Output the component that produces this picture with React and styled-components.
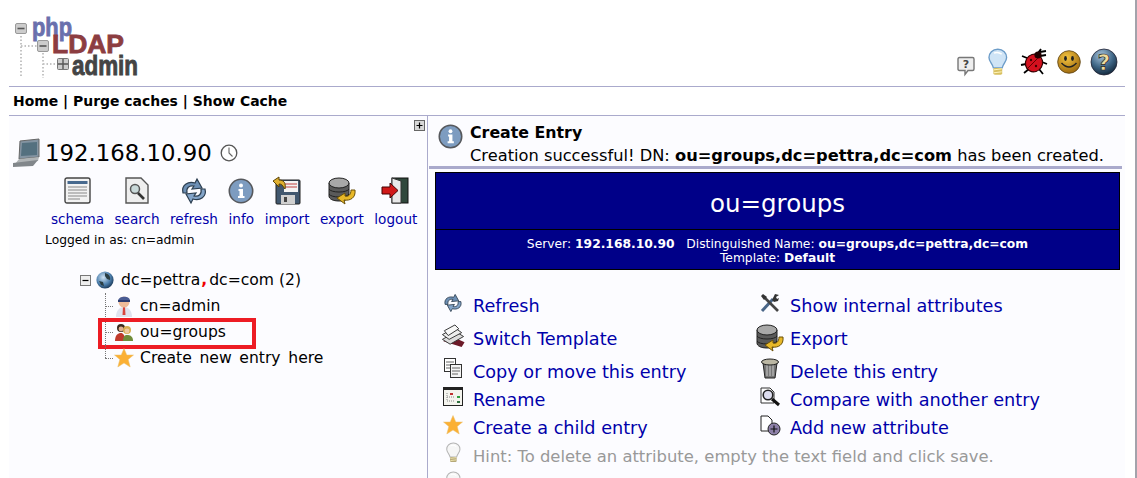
import React from 'react'
import styled, { createGlobalStyle } from 'styled-components'

const GlobalStyle = createGlobalStyle`
  html, body {
    margin: 0;
    height: 478px;
    overflow: hidden;
    background: #fff;
    font-family: "DejaVu Sans", Verdana, sans-serif;
  }
`

const Shell = styled.div`
  width: 1137px;
  height: 478px;
  box-sizing: border-box;
  border-right: 2px solid #a3a3ab;
  padding: 0 10px 0 9px;
  overflow: hidden;
`
const Header = styled.header`
  height: 87px;
  box-sizing: border-box;
  display: flex;
  justify-content: space-between;
  align-items: flex-end;
  border-bottom: 1px solid #aaaacc;
  padding: 0 7px 8px 6px;
`
const LogoWrap = styled.div`
  height: 60px;
`
const HeaderIcons = styled.div`
  display: flex;
  align-items: flex-end;
  margin-bottom: 2px;
`
const HeaderIcon = styled.span`
  margin-left: ${p => p.$gap || 0}px;
  margin-bottom: ${p => p.$lift || 0}px;
`
const Nav = styled.nav`
  height: 29px;
  box-sizing: border-box;
  display: flex;
  align-items: center;
  padding-left: 4px;
  font-size: 13.95px;
  font-weight: 700;
  color: #000;
  border-bottom: 1px solid #aaaacc;
  white-space: pre;
`
const Main = styled.main`
  display: grid;
  grid-template-columns: 419px 1fr;
  background: #fcfcff;
  height: 380px;
`
const LeftPane = styled.section`
  border-right: 1px solid #aaaacc;
  padding: 4px 2px 0 0;
`
const ExpandRow = styled.div`
  display: flex;
  justify-content: flex-end;
  height: 11px;
`
const ServerTitle = styled.div`
  display: flex;
  align-items: center;
  gap: 4px;
  margin: 5px 0 0 4px;
  height: 34px;
  font-size: 22.8px;
  color: #000;
`
const ClockSlot = styled.span`
  margin-left: 4px;
`
const Toolbar = styled.div`
  display: flex;
  gap: 10.4px;
  margin: 6px 0 0 42px;
`
const ToolItem = styled.div`
  display: flex;
  flex-direction: column;
  align-items: center;
  gap: 6px;
  font-size: 13.6px;
  color: #0000aa;
`
const ToolIcon = styled.div`
  height: 29px;
  display: flex;
  align-items: center;
`
const LoggedIn = styled.div`
  margin: 6px 0 0 36px;
  font-size: 12.3px;
  color: #000;
`
const Tree = styled.div`
  margin: 20px 0 0 71px;
  font-size: 15.6px;
  color: #000;
`
const RootRow = styled.div`
  display: flex;
  align-items: center;
  gap: 5px;
  height: 26px;
`
const RootLabel = styled.span`
  margin-left: 2px;
`
const DnComma = styled.span`
  color: #f00000;
  font-weight: 700;
  padding: 0 2px 0 1px;
`
const TreeRow = styled.div`
  position: relative;
  display: flex;
  align-items: center;
  height: 26px;
  margin-left: 25px;
  word-spacing: 2.7px;
`
const Connector = styled.span`
  position: relative;
  align-self: stretch;
  width: 8px;
  flex: none;
  &::before {
    content: '';
    position: absolute;
    left: 0;
    top: 0;
    bottom: ${p => (p.$last ? '50%' : '0')};
    border-left: 1px dotted #777;
  }
  &::after {
    content: '';
    position: absolute;
    left: 0;
    right: 0;
    top: 50%;
    border-top: 1px dotted #777;
  }
`
const TreeIcon = styled.span`
  width: 22px;
  margin-right: 5px;
  flex: none;
  display: flex;
  justify-content: center;
`
const Highlight = styled.span`
  position: absolute;
  left: -7px;
  top: -1px;
  width: 158px;
  height: 31px;
  box-sizing: border-box;
  border: 4px solid #ed1c24;
`
const RightPane = styled.section`
  padding: 7px 3px 0 0;
`
const Message = styled.div`
  display: grid;
  grid-template-columns: 32px 1fr;
  margin-left: 1px;
  padding-left: 9px;
  border-bottom: 3px solid #aaaacc;
  height: 46px;
  box-sizing: border-box;
`
const MessageIcon = styled.div`
  padding-top: 1px;
`
const MessageTitle = styled.div`
  font-size: 15.8px;
  font-weight: 700;
  color: #000;
  line-height: 20px;
`
const MessageBody = styled.div`
  font-size: 16.25px;
  color: #000;
  line-height: 25px;
  white-space: nowrap;
`
const EntryBanner = styled.div`
  margin: 3px 2px 0 7px;
  background: #000088;
  border: 1px solid #000;
  color: #fff;
  text-align: center;
`
const BannerTitle = styled.div`
  height: 56px;
  line-height: 61px;
  font-size: 24.5px;
  border-bottom: 1px solid #000;
`
const BannerMeta = styled.div`
  padding: 7px 0 4px;
  font-size: 12.3px;
  line-height: 14px;
  white-space: pre;
`
const Actions = styled.div`
  display: grid;
  grid-template-columns: 317px 1fr;
  margin: 25px 0 0 13px;
`
const ActionCell = styled.a`
  display: flex;
  align-items: flex-start;
  height: ${p => p.$height}px;
  line-height: 22px;
  color: #0000aa;
  font-size: 17.65px;
  white-space: nowrap;
`
const ActionIcon = styled.span`
  width: 24px;
  margin-right: 8px;
  flex: none;
  display: flex;
  justify-content: center;
  margin-top: ${p => p.$top}px;
`
const HintRow = styled.div`
  grid-column: 1 / 3;
  display: flex;
  align-items: flex-start;
  height: 28px;
  line-height: 22px;
  color: #999;
  font-size: 16.4px;
  white-space: nowrap;
`

const Svg = ({ w, h, vb, children }) => (
  <svg width={w} height={h} viewBox={vb || `0 0 ${w} ${h}`} style={{ display: 'block', flex: 'none', overflow: 'visible' }}>
    {children}
  </svg>
)

const Logo = () => (
  <Svg w={126} h={60}>
    <g stroke="#c4c4c4" strokeWidth="2" strokeDasharray="1.5 2" fill="none">
      <path d="M6 18V60M6 28H22M28 35V60M28 46H42" />
    </g>
    <rect x="0.5" y="5.5" width="11" height="10" rx="1.5" fill="#ccc" stroke="#999" />
    <path d="M2.5 10.5H9.5" stroke="#555" strokeWidth="1.6" />
    <rect x="22.5" y="22.5" width="11" height="11" rx="1.5" fill="#ccc" stroke="#999" />
    <path d="M24.5 28H31.5" stroke="#555" strokeWidth="1.6" />
    <rect x="42.5" y="40.5" width="11" height="11" rx="1" fill="#ccc" stroke="#777" />
    <path d="M43 46H53M48 41V51" stroke="#555" strokeWidth="1.4" />
    <text x="17" y="18" fontFamily="Liberation Sans" fontWeight="700" fontSize="25" fill="#6a70ad" stroke="#6a70ad" strokeWidth="0.8" textLength="40" lengthAdjust="spacingAndGlyphs">php</text>
    <text x="37" y="35" fontFamily="Liberation Sans" fontWeight="700" fontSize="25" fill="#8c3d41" stroke="#8c3d41" strokeWidth="0.8" textLength="72" lengthAdjust="spacingAndGlyphs">LDAP</text>
    <text x="57" y="57" fontFamily="Liberation Sans" fontWeight="700" fontSize="27" fill="#444" stroke="#444" strokeWidth="0.9" textLength="66" lengthAdjust="spacingAndGlyphs">admin</text>
  </Svg>
)

const SpeechIcon = () => (
  <Svg w={18} h={20}>
    <path d="M2.5 1.5H15.5Q17 1.5 17 3V13Q17 14.5 15.5 14.5H11L8 18.5V14.5H2.5Q1 14.5 1 13V3Q1 1.5 2.5 1.5Z" fill="#eee" stroke="#777" strokeWidth="1.4" />
    <text x="9" y="12" textAnchor="middle" fontSize="11" fontWeight="700" fontFamily="DejaVu Sans" fill="#444">?</text>
  </Svg>
)

const BulbIcon = ({ size = 28, dim }) => (
  <Svg w={size * 0.7} h={size} vb="0 0 20 28">
    <path d="M10 1C4.5 1 1 5 1 9.5C1 13.5 4.5 15.5 5.5 20H14.5C15.5 15.5 19 13.5 19 9.5C19 5 15.5 1 10 1Z" fill={dim ? '#f6f6f6' : '#cfe4f6'} stroke={dim ? '#b4b4b4' : '#6c9cc8'} strokeWidth="1.4" />
    <path d="M6 5Q10 3 14 6" stroke="#fff" strokeWidth="1.5" fill="none" />
    <rect x="5.5" y="20" width="9" height="7" rx="1.5" fill={dim ? '#b5a878' : '#d8c060'} />
    <path d="M6 22L14 21M6 25L14 24" stroke="#fff6c0" />
  </Svg>
)

const BugIcon = () => (
  <Svg w={27} h={28}>
    <g stroke="#000" strokeWidth="1.8" fill="none">
      <path d="M6 10L1 8M5 16L0 17M8 21L3 25M19 8L25 7M21 14L26 16M18 21L22 26M17 5L20 1M19 4L25 3" />
    </g>
    <ellipse cx="13" cy="15" rx="8.5" ry="9" fill="#d4101e" stroke="#300" strokeWidth="1.2" transform="rotate(30 13 15)" />
    <circle cx="17" cy="7" r="3.6" fill="#200" />
    <path d="M7 20L17 10" stroke="#600" strokeWidth="1" />
    <circle cx="10" cy="12" r="1.2" fill="#400" />
    <circle cx="15" cy="18" r="1.2" fill="#400" />
  </Svg>
)

const SmileyIcon = () => (
  <Svg w={24} h={25}>
    <defs>
      <radialGradient id="smile" cx="40%" cy="30%" r="70%">
        <stop offset="0" stopColor="#f4c440" />
        <stop offset="1" stopColor="#a06c10" />
      </radialGradient>
    </defs>
    <circle cx="12" cy="12" r="11.3" fill="url(#smile)" stroke="#5a4010" strokeWidth="0.8" />
    <ellipse cx="8.5" cy="8.5" rx="1.4" ry="2.4" fill="#222" />
    <ellipse cx="15.5" cy="8.5" rx="1.4" ry="2.4" fill="#222" />
    <path d="M4.5 13Q12 21 19.5 13" stroke="#222" strokeWidth="1.5" fill="none" />
  </Svg>
)

const HelpIcon = () => (
  <Svg w={28} h={28}>
    <defs>
      <radialGradient id="help" cx="40%" cy="25%" r="75%">
        <stop offset="0" stopColor="#a8c4dc" />
        <stop offset="0.6" stopColor="#3f6686" />
        <stop offset="1" stopColor="#162c40" />
      </radialGradient>
    </defs>
    <circle cx="14" cy="14" r="13" fill="url(#help)" stroke="#223" strokeWidth="0.8" />
    <text x="14" y="22" textAnchor="middle" fontSize="22" fontWeight="700" fontFamily="DejaVu Sans" fill="#f0dc9c" stroke="#222" strokeWidth="0.7">?</text>
  </Svg>
)

const PlusBox = () => (
  <Svg w={11} h={11}>
    <rect x="0.5" y="0.5" width="10" height="10" fill="#d8d8d8" stroke="#666" />
    <path d="M2.5 5.5H8.5M5.5 2.5V8.5" stroke="#000" strokeWidth="1.2" />
  </Svg>
)

const MinusBox = () => (
  <Svg w={11} h={11}>
    <rect x="0.5" y="0.5" width="10" height="10" fill="#eee" stroke="#777" />
    <path d="M2.5 5.5H8.5" stroke="#000" strokeWidth="1.2" />
  </Svg>
)

const ComputerIcon = () => (
  <Svg w={28} h={28}>
    <path d="M7 2L26 0V18L6 20Z" fill="#8494a2" stroke="#666" />
    <path d="M9 4L24 3V16L8 17Z" fill="#54707f" />
    <path d="M6 20L26 18L25 22L2 25Z" fill="#b0b4b6" />
    <path d="M0 24L25 21L20 27L0 28Z" fill="#82878b" />
  </Svg>
)

const ClockIcon = () => (
  <Svg w={18} h={18}>
    <circle cx="9" cy="9" r="7.8" fill="#fff" stroke="#555" strokeWidth="1.3" />
    <path d="M9 3.5V9L12.5 12.5" stroke="#666" strokeWidth="1.1" fill="none" />
  </Svg>
)

const SchemaIcon = () => (
  <Svg w={27} h={27}>
    <rect x="1" y="1" width="25" height="25" rx="2" fill="#f2f2f2" stroke="#444" strokeWidth="1.4" />
    <rect x="3.5" y="4" width="20" height="3" fill="#47698e" />
    <path d="M4 10H23M4 13H23M4 16H23M4 19H23M4 22H16" stroke="#888" />
  </Svg>
)

const SearchIcon = () => (
  <Svg w={24} h={27}>
    <path d="M1 1H16L23 8V26H1Z" fill="#eee" stroke="#555" strokeWidth="1.4" />
    <circle cx="10" cy="12" r="4.5" fill="#c8d8d8" stroke="#555" strokeWidth="1.5" />
    <path d="M13 16L19 22" stroke="#333" strokeWidth="2.6" />
  </Svg>
)

const RefreshIcon = ({ size = 28 }) => (
  <Svg w={size} h={size} vb="0 0 28 28">
    <path d="M3 16C1 8 8 4 15 6L17 2L22 11L12 12L14 9C9 8 6 11 7 16Z" fill="#6d8fb4" stroke="#2c3e50" strokeWidth="1.2" />
    <path d="M25 12C27 20 20 24 13 22L11 26L6 17L16 16L14 19C19 20 22 17 21 12Z" fill="#83a4c8" stroke="#2c3e50" strokeWidth="1.2" />
  </Svg>
)

const InfoIcon = ({ size = 26 }) => (
  <Svg w={size} h={size} vb="0 0 26 26">
    <circle cx="13" cy="13" r="11.7" fill="#7d9cc0" stroke="#56585c" strokeWidth="1.6" />
    <circle cx="13" cy="7.5" r="2" fill="#fff" />
    <path d="M10.5 11H15V18H16.5V20H10V18H11.5V13H10.5Z" fill="#fff" />
  </Svg>
)

const ImportIcon = () => (
  <Svg w={28} h={28}>
    <rect x="3" y="3" width="24" height="24" rx="1" fill="#41576e" stroke="#222" />
    <rect x="11" y="4" width="14" height="11" fill="#f4f4f4" />
    <path d="M12 7H24M12 10H24" stroke="#c04040" />
    <rect x="8" y="18" width="14" height="9" fill="#d0d0d0" />
    <rect x="11" y="20" width="3" height="5" fill="#444" />
    <path d="M0 4L6 0V3C11 3 13 6 12 12L9 8C8 7 7 7 6 7V10Z" fill="#e0b030" stroke="#5a4408" />
  </Svg>
)

const ExportIcon = () => (
  <Svg w={28} h={28}>
    <path d="M1 6V19C1 22 5 24 11 24C17 24 21 22 21 19V6Z" fill="#5a5a5a" stroke="#222" />
    <ellipse cx="11" cy="6" rx="10" ry="5" fill="#a8a8a8" stroke="#222" />
    <path d="M1 12C3 16 19 16 21 12M1 17C3 21 19 21 21 17" stroke="#222" fill="none" />
    <path d="M27 13C28 21 22 24 16 23L17 27L9 21L17 16V19C20 20 23 18 23 13Z" fill="#e8b828" stroke="#6a5008" />
  </Svg>
)

const LogoutIcon = () => (
  <Svg w={27} h={27}>
    <rect x="10" y="1" width="16" height="25" fill="#30483c" stroke="#111" />
    <path d="M10 1L19 4V26H10Z" fill="#e8e8e8" stroke="#333" />
    <path d="M0 10H8V6L16 13.5L8 21V17H0Z" fill="#d01818" stroke="#400" />
  </Svg>
)

const GlobeIcon = () => (
  <Svg w={18} h={18}>
    <defs>
      <radialGradient id="globe" cx="40%" cy="35%" r="70%">
        <stop offset="0" stopColor="#cfe2f2" />
        <stop offset="0.6" stopColor="#4d80ae" />
        <stop offset="1" stopColor="#14304e" />
      </radialGradient>
    </defs>
    <circle cx="9" cy="9" r="8.6" fill="url(#globe)" />
    <path d="M9 2C13 3 15 6 14 9L11 8L9 5Z M3 10L7 11L8 15L5 14Z" fill="#2a3e44" />
  </Svg>
)

const PersonIcon = () => (
  <Svg w={18} h={22}>
    <path d="M1 22C1 15 5 12 9 12C13 12 17 15 17 22Z" fill="#dfe2ee" />
    <path d="M8 12H10L10.5 20H7.5Z" fill="#d8453e" />
    <circle cx="9" cy="7" r="5.5" fill="#eebb99" />
    <path d="M3 6C3 1 15 0 15 6Z" fill="#4a5c94" />
    <rect x="3" y="5" width="12" height="2" fill="#2d3c70" />
  </Svg>
)

const GroupIcon = () => (
  <Svg w={20} h={19}>
    <circle cx="7" cy="5" r="4" fill="#3a2a1c" />
    <circle cx="13" cy="7" r="4" fill="#d8ae50" />
    <circle cx="7" cy="6" r="2.4" fill="#e0b090" />
    <circle cx="13" cy="8" r="2.4" fill="#eec8a0" />
    <path d="M1 18C1 12 4 10 7 10C9 10 11 12 11 18Z" fill="#c0392b" />
    <path d="M9 18C9 13 11 12 13 12C16 12 19 13 19 18Z" fill="#6f8c3a" />
  </Svg>
)

const StarIcon = ({ size = 20 }) => (
  <Svg w={size} h={size} vb="0 0 20 20">
    <path d="M10 0.5L12.8 7H19.5L14.2 11.5L16.2 19L10 15L3.8 19L5.8 11.5L0.5 7H7.2Z" fill="#fbb034" stroke="#e8c070" strokeWidth="0.5" />
  </Svg>
)

const TemplateIcon = () => (
  <Svg w={30} h={25} vb="0 0 26 26">
    <path d="M3 18L22 24L25 19L12 13Z" fill="#6c1a28" />
    <path d="M2 16L16 8L24 13L10 21Z" fill="#ddd" stroke="#333" />
    <path d="M2 11L15 4L22 9L9 16Z" fill="#eee" stroke="#333" />
    <path d="M4 7L15 1L19 5L8 12Z" fill="#f8f8f8" stroke="#333" />
  </Svg>
)

const CopyIcon = () => (
  <Svg w={18} h={20}>
    <rect x="0.5" y="0.5" width="11" height="13" fill="#fff" stroke="#333" />
    <path d="M2 4H10M2 7H10M2 10H8" stroke="#666" />
    <rect x="6.5" y="6.5" width="11" height="13" fill="#f4f4f4" stroke="#333" />
    <path d="M8 10H16M8 13H16M8 16H14" stroke="#666" />
  </Svg>
)

const RenameIcon = () => (
  <Svg w={20} h={19}>
    <rect x="0.5" y="0.5" width="19" height="18" fill="#f4f4ee" stroke="#222" />
    <rect x="1" y="1" width="18" height="2" fill="#222" />
    <rect x="7" y="6" width="3" height="2" fill="#c03030" />
    <rect x="14" y="9" width="3" height="2" fill="#30a040" />
    <rect x="14" y="14" width="3" height="2" fill="#307040" />
    <path d="M4 6V14H12M4 10H12" stroke="#888" strokeDasharray="1 1" fill="none" />
  </Svg>
)

const ToolsIcon = () => (
  <Svg w={20} h={20}>
    <path d="M2 18L13 6" stroke="#4a6688" strokeWidth="3" />
    <path d="M12 7L15 1L19 2L16 4L17 6L19 5L18 8L14 9Z" fill="#333" />
    <path d="M18 18L5 5" stroke="#444" strokeWidth="2.6" />
    <path d="M1 3L3 1L7 4L4 7Z" fill="#333" />
  </Svg>
)

const TrashIcon = () => (
  <Svg w={20} h={21}>
    <path d="M3 5H17L15 20H5Z" fill="#777" stroke="#222" />
    <path d="M7 7V18M10 7V18M13 7V18" stroke="#ccc" />
    <ellipse cx="10" cy="4" rx="8.5" ry="3" fill="#bbb7a4" stroke="#222" />
  </Svg>
)

const CompareIcon = () => (
  <Svg w={21} h={20}>
    <path d="M1 1H10L14 5V16H1Z" fill="#fff" stroke="#333" />
    <circle cx="8" cy="8" r="4.8" fill="#dde" stroke="#222" strokeWidth="1.6" />
    <path d="M12 12L19 18" stroke="#111" strokeWidth="3" />
  </Svg>
)

const AddAttrIcon = () => (
  <Svg w={21} h={21}>
    <path d="M1 1H8L12 5V16H1Z" fill="#fff" stroke="#222" />
    <circle cx="14" cy="14" r="6" fill="#8d80a8" stroke="#222" />
    <path d="M10.5 14H17.5M14 10.5V17.5" stroke="#111" strokeWidth="1.2" />
  </Svg>
)

const tools = [
  ['schema', <SchemaIcon />],
  ['search', <SearchIcon />],
  ['refresh', <RefreshIcon />],
  ['info', <InfoIcon />],
  ['import', <ImportIcon />],
  ['export', <ExportIcon />],
  ['logout', <LogoutIcon />],
]

const actions = [
  [33, 'Refresh', <RefreshIcon size={20} />, 'Show internal attributes', <ToolsIcon />, -2],
  [33, 'Switch Template', <TemplateIcon />, 'Export', <ExportIcon />, -4],
  [28, 'Copy or move this entry', <CopyIcon />, 'Delete this entry', <TrashIcon />, -3],
  [28, 'Rename', <RenameIcon />, 'Compare with another entry', <CompareIcon />, -2],
  [29, 'Create a child entry', <StarIcon />, 'Add new attribute', <AddAttrIcon />, -2],
]

export default function App() {
  return (
    <>
      <GlobalStyle />
      <Shell>
        <Header>
          <LogoWrap><Logo /></LogoWrap>
          <HeaderIcons>
            <HeaderIcon><SpeechIcon /></HeaderIcon>
            <HeaderIcon $gap={13}><BulbIcon /></HeaderIcon>
            <HeaderIcon $gap={13}><BugIcon /></HeaderIcon>
            <HeaderIcon $gap={9} $lift={1}><SmileyIcon /></HeaderIcon>
            <HeaderIcon $gap={9}><HelpIcon /></HeaderIcon>
          </HeaderIcons>
        </Header>
        <Nav>Home | Purge caches | Show Cache</Nav>
        <Main>
          <LeftPane>
            <ExpandRow><PlusBox /></ExpandRow>
            <ServerTitle>
              <ComputerIcon />
              <span>192.168.10.90</span>
              <ClockSlot><ClockIcon /></ClockSlot>
            </ServerTitle>
            <Toolbar>
              {tools.map(([label, icon]) => (
                <ToolItem key={label}>
                  <ToolIcon>{icon}</ToolIcon>
                  {label}
                </ToolItem>
              ))}
            </Toolbar>
            <LoggedIn>Logged in as: cn=admin</LoggedIn>
            <Tree>
              <RootRow>
                <MinusBox />
                <GlobeIcon />
                <RootLabel>dc=pettra<DnComma>,</DnComma>dc=com (2)</RootLabel>
              </RootRow>
              <TreeRow>
                <Connector />
                <TreeIcon><PersonIcon /></TreeIcon>
                cn=admin
              </TreeRow>
              <TreeRow>
                <Connector />
                <TreeIcon><GroupIcon /></TreeIcon>
                ou=groups
                <Highlight />
              </TreeRow>
              <TreeRow>
                <Connector $last />
                <TreeIcon><StarIcon /></TreeIcon>
                Create new entry here
              </TreeRow>
            </Tree>
          </LeftPane>
          <RightPane>
            <Message>
              <MessageIcon><InfoIcon size={25} /></MessageIcon>
              <div>
                <MessageTitle>Create Entry</MessageTitle>
                <MessageBody>
                  Creation successful! DN: <b>ou=groups,dc=pettra,dc=com</b> has been created.
                </MessageBody>
              </div>
            </Message>
            <EntryBanner>
              <BannerTitle>ou=groups</BannerTitle>
              <BannerMeta>
                Server: <b>192.168.10.90</b>{'   '}Distinguished Name: <b>ou=groups,dc=pettra,dc=com</b>
                {'\n'}Template: <b>Default</b>
              </BannerMeta>
            </EntryBanner>
            <Actions>
              {actions.map(([height, left, leftIcon, right, rightIcon, top]) => (
                <React.Fragment key={left}>
                  <ActionCell $height={height}>
                    <ActionIcon $top={top}>{leftIcon}</ActionIcon>
                    {left}
                  </ActionCell>
                  <ActionCell $height={height}>
                    <ActionIcon $top={top}>{rightIcon}</ActionIcon>
                    {right}
                  </ActionCell>
                </React.Fragment>
              ))}
              <HintRow>
                <ActionIcon $top={-4}><BulbIcon size={21} dim /></ActionIcon>
                Hint: To delete an attribute, empty the text field and click save.
              </HintRow>
              <HintRow>
                <ActionIcon $top={-3}><BulbIcon size={21} dim /></ActionIcon>
                Hint: To view the schema for an attribute, click the attribute name.
              </HintRow>
            </Actions>
          </RightPane>
        </Main>
      </Shell>
    </>
  )
}
